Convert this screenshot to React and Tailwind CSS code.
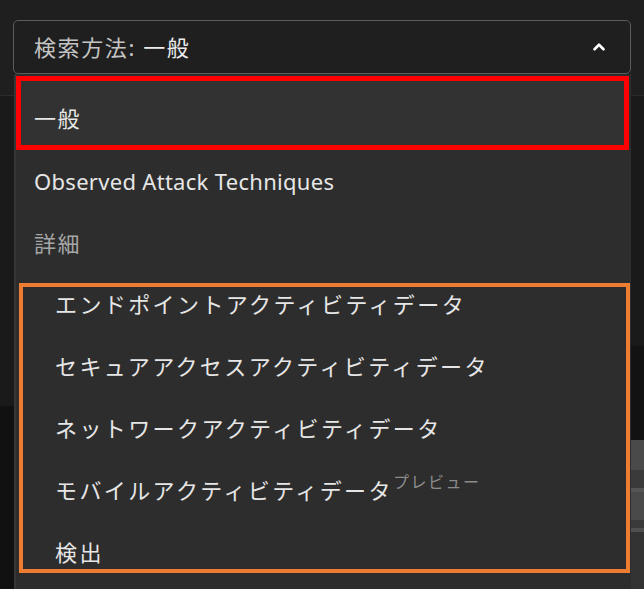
import { ChevronUp } from "lucide-react";

const jp = { fontFamily: '"Noto Sans", "Noto Sans CJK JP", sans-serif' };

const items = [
  { label: "エンドポイントアクティビティデータ" },
  { label: "セキュアアクセスアクティビティデータ" },
  { label: "ネットワークアクティビティデータ" },
  { label: "モバイルアクティビティデータ", preview: true },
  { label: "検出" },
];

const Row = ({ children, className = "" }) => (
  <div className={"h-[62px] flex items-center " + className}>{children}</div>
);

export default function App() {
  return (
    <div
      className="relative w-[644px] h-[589px] overflow-hidden bg-[#1f1f1f] text-[#e6e6e6]"
      style={jp}
    >
      {/* page behind the dropdown */}
      <div className="h-[96px] border-b border-[#2b2b2b] px-[13px] pt-[20px]">
        <div className="h-[54px] rounded-[5px] border-[1.5px] border-[#5c5c5c] bg-[#1f1f1f] flex items-center justify-between pl-[20px] pr-[22px]">
          <span className="text-[22px] tracking-[1.6px] text-[#c4c4c4]">
            検索方法: <span className="text-[#ececec]">一般</span>
          </span>
          <ChevronUp size={18} strokeWidth={3.5} className="text-white" />
        </div>
      </div>
      <div className="flex h-[493px]">
        <div className="w-[14px] flex flex-col">
          <div className="h-[310px] bg-[#1a1a1a]" />
          <div className="flex-1 bg-[#111111]" />
        </div>
        <div className="flex-1" />
        <div className="w-[13px] flex flex-col bg-[#1a1a1a]">
          <div className="h-[250px] bg-[#1a1a1a]" />
          <div className="h-[94px] bg-[#121212]" />
          <div className="h-[30px] bg-[#4a4a4a]" />
          <div className="h-[18px] bg-[#3a3a3a]" />
          <div className="h-[4px] bg-[#555555]" />
          <div className="h-[28px] bg-[#4a4a4a]" />
          <div className="h-[8px] bg-[#3a3a3a]" />
          <div className="h-[4px] bg-[#505050]" />
          <div className="flex-1 bg-[#333333]" />
        </div>
      </div>

      {/* dropdown menu */}
      <div className="absolute left-[14px] top-[74px] w-[617px] h-[530px] bg-[#2d2d2d] border-l-2 border-[#363636]">
        <div className="mt-[2px] w-[613px] h-[74px] border-[5px] border-[#ff0000] bg-[#323232] flex items-center pl-[13px] pt-[10px]">
          <span className="text-[22px] tracking-[1.6px]">一般</span>
        </div>
        <div className="pl-[18px]">
          <Row>
            <span className="text-[22px] tracking-[0.3px]">Observed Attack Techniques</span>
          </Row>
          <Row>
            <span className="text-[22px] tracking-[1.6px] text-[#a6a6a6]">詳細</span>
          </Row>
          <div className="pl-[21px] -mt-[1px]">
            {items.map((it) => (
              <Row key={it.label}>
                <span className="text-[22px] tracking-[2.4px]">{it.label}</span>
                {it.preview && (
                  <span className="self-start mt-[11px] text-[16px] text-[#8c8c8c] tracking-[1.5px]">
                    プレビュー
                  </span>
                )}
              </Row>
            ))}
          </div>
        </div>
      </div>

      {/* annotation */}
      <div className="absolute left-[19px] top-[283px] w-[611px] h-[290px] border-[4px] border-[#ed7d31] pointer-events-none" />
    </div>
  );
}
